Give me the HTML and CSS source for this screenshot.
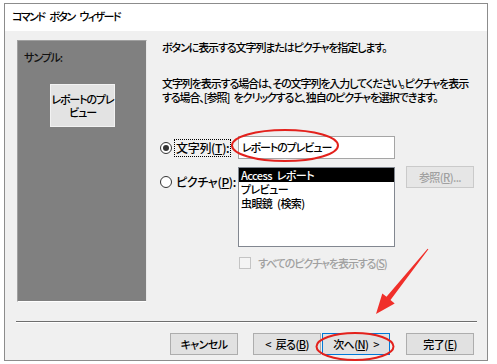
FILE: index.html
```html
<!DOCTYPE html>
<html lang="ja">
<head>
<meta charset="utf-8">
<title>コマンド ボタン ウィザード</title>
<link rel="stylesheet" href="styles.css">
</head>
<body>
<div class="window">
  <div class="titlebar">コマンド ボタン ウィザード</div>
  <div class="client">
    <div class="main">
      <div class="sample">
        <div class="sample-label">サンプル:</div>
        <div class="sample-btn"><span>レポートのプレ</span><span>ビュー</span></div>
      </div>
      <div class="content">
        <p class="p1">ボタンに表示する文字列またはピクチャを指定します。</p>
        <p class="p2">文字列を表示する場合は、その文字列を入力してください。ピクチャを表示<br>する場合、[参照] をクリックすると、独自のピクチャを選択できます。</p>
        <div class="form">
          <label class="radio r1"><span class="dot on"></span><span class="focus">文字列(<u>T</u>):</span></label>
          <div class="input">レポートのプレビュー</div>
          <label class="radio r2"><span class="dot"></span><span class="lbl">ピクチャ(<u>P</u>):</span></label>
          <div class="list">
            <div class="item sel">Access レポート</div>
            <div class="item">プレビュー</div>
            <div class="item">虫眼鏡 (検索)</div>
          </div>
          <div class="btn disabled browse">参照(<u>R</u>)...</div>
          <div class="check"><span class="box"></span><span>すべてのピクチャを表示する(<u>S</u>)</span></div>
        </div>
      </div>
    </div>
    <div class="sep"></div>
    <div class="buttons">
      <div class="btn cancel">キャンセル</div>
      <div class="btn back">&lt; 戻る(<u>B</u>)</div>
      <div class="btn next">次へ(<u>N</u>) &gt;</div>
      <div class="btn finish">完了(<u>E</u>)</div>
    </div>
  </div>
</div>
<svg class="annot" width="497" height="364" viewBox="0 0 497 364">
  <ellipse cx="285" cy="145.5" rx="53" ry="15.5" fill="none" stroke="#e3211c" stroke-width="2"/>
  <ellipse cx="355" cy="346.5" rx="38.5" ry="13.5" fill="none" stroke="#e3211c" stroke-width="2"/>
  <polygon points="428.4,249.3 390.5,300 394.7,303.4 376,314 382.3,293.4 386.5,296.8 427.6,248.7" fill="#f02f2a"/>
</svg>
</body>
</html>
```
FILE: styles.css
```css
html, body {
  margin: 0;
  padding: 0;
  background: #ffffff;
}
body {
  width: 497px;
  height: 364px;
  position: relative;
  overflow: hidden;
  font-family: "Noto Sans CJK JP", "Noto Sans", sans-serif;
  font-size: 11px;
  font-weight: 500;
  line-height: 14px;
  letter-spacing: -1.1px;
  word-spacing: 3px;
  color: #000;
  font-feature-settings: "palt" 1;
}
.window {
  margin: 3px 0 0 4px;
  width: 484px;
  height: 358px;
  box-sizing: border-box;
  border: 1px solid #8c8c8c;
  display: flex;
  flex-direction: column;
}
.titlebar {
  height: 27px;
  box-sizing: border-box;
  padding: 5px 0 0 7px;
  background: #fff;
  white-space: nowrap;
  letter-spacing: -1.6px;
  word-spacing: 4px;
}
.client {
  flex: 1;
  background: #f0f0f0;
  display: flex;
  flex-direction: column;
}
.main {
  display: flex;
  padding: 9px 0 0 12px;
}
.sample {
  flex: none;
  width: 130px;
  height: 262px;
  box-sizing: border-box;
  background: #808080;
  border: 1px solid;
  border-color: #a0a0a0 #e8e8e8 #ffffff #a0a0a0;
  padding: 9px 0 0 6px;
  display: flex;
  flex-direction: column;
}
.sample-label {
  color: #111;
}
.sample-btn {
  margin: 20px 0 0 26px;
  width: 65px;
  height: 43px;
  box-sizing: border-box;
  background: #e3e3e3;
  border: 1px solid #f2f2f2;
  display: flex;
  flex-direction: column;
  align-items: center;
  justify-content: center;
  white-space: nowrap;
  line-height: 13px;
}
.content {
  margin-left: 15px;
  flex: 1;
  min-width: 0;
}
.content p {
  margin: 0;
  white-space: nowrap;
}
.p2 {
  margin-top: 22px !important;
}
.form {
  margin: 32px 0 0 -2px;
  display: grid;
  grid-template-columns: 78px 157px 11px 68px;
  grid-template-rows: 23px 80px auto;
  row-gap: 8px;
}
.radio {
  grid-column: 1;
  display: flex;
  align-items: center;
  gap: 4px;
  white-space: nowrap;
  font-size: 12px;
  letter-spacing: -0.3px;
}
.r1 { grid-row: 1; align-self: center; margin-top: 1px; }
.r2 { grid-row: 2; align-self: start; margin-top: 8px; }
.dot {
  width: 12px;
  height: 12px;
  box-sizing: border-box;
  border: 1px solid #333;
  border-radius: 50%;
  background: #fff;
  display: flex;
  align-items: center;
  justify-content: center;
  flex: none;
}
.dot.on::after {
  content: "";
  width: 6px;
  height: 6px;
  border-radius: 50%;
  background: #333;
}
.focus {
  outline: 1px dotted #000;
  outline-offset: 1px;
}
.input {
  grid-column: 2;
  grid-row: 1;
  box-sizing: border-box;
  border: 1px solid #a5a5a5;
  background: #fff;
  padding-left: 3px;
  line-height: 21px;
  white-space: nowrap;
}
.list {
  grid-column: 2;
  grid-row: 2;
  box-sizing: border-box;
  border: 1px solid #828790;
  background: #fff;
}
.item {
  padding-left: 2px;
  line-height: 14px;
  white-space: nowrap;
  letter-spacing: -0.6px;
}
.item.sel {
  background: #000;
  color: #fff;
}
.btn {
  box-sizing: border-box;
  width: 68px;
  height: 22px;
  background: #e1e1e1;
  border: 1px solid #adadad;
  display: flex;
  align-items: center;
  justify-content: center;
  white-space: nowrap;
  letter-spacing: -0.6px;
}
.btn.disabled {
  background: #e6e6e6;
  border-color: #cacaca;
  color: #a0a0a0;
}
.browse {
  grid-column: 4;
  grid-row: 2;
  align-self: start;
  margin-top: -1px;
}
.check {
  grid-column: 2 / span 3;
  grid-row: 3;
  margin: 1px 0 0 1px;
  display: flex;
  align-items: center;
  gap: 7px;
  color: #a0a0a0;
  white-space: nowrap;
}
.box {
  width: 12px;
  height: 12px;
  box-sizing: border-box;
  border: 1px solid #c4c4c4;
  background: #f4f4f4;
  flex: none;
}
.sep {
  margin: 19px 0 0 11px;
  width: 461px;
  height: 1px;
  background: #6e6e6e;
  border-bottom: 1px solid #ffffff;
}
.buttons {
  display: flex;
  margin: 10px 0 0 165px;
}
.back { margin-left: 15px; }
.next {
  margin-left: 1px;
  border-color: #0078d7;
}
.finish { margin-left: 16px; }
.annot {
  position: absolute;
  left: 0;
  top: 0;
  pointer-events: none;
}
```
